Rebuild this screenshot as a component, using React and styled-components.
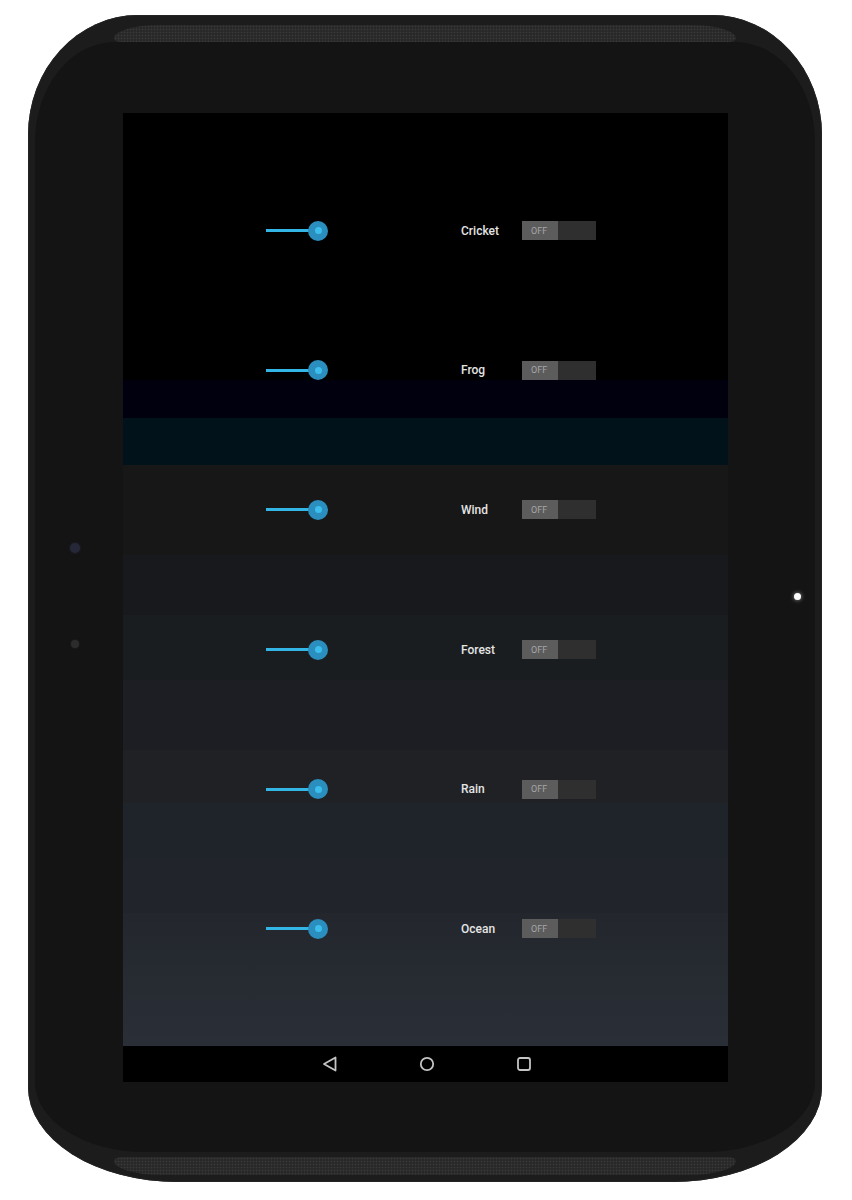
import React from 'react';
import styled, { createGlobalStyle } from 'styled-components';

const GlobalStyle = createGlobalStyle`
  html, body {
    margin: 0;
    padding: 0;
    background: #ffffff;
  }
`;

const Page = styled.div`
  width: 852px;
  height: 1200px;
  padding: 15px 0 0 28px;
  box-sizing: border-box;
  display: flex;
  align-items: flex-start;
`;

const Device = styled.div`
  position: relative;
  width: 794px;
  height: 1167px;
  background: #1c1c1c;
  border-radius: 110px 110px 150px 150px / 120px 120px 95px 95px;
  display: flex;
  flex-direction: column;
  align-items: center;
  box-shadow: inset 0 0 0 1px #232323;
`;

const Grille = styled.div`
  width: 622px;
  height: ${(p) => p.h}px;
  margin-top: ${(p) => p.mt}px;
  background-color: #282828;
  background-image: radial-gradient(circle, #3a3a3a 0.7px, transparent 1.1px);
  background-size: 3px 3px;
  border-radius: ${(p) =>
    p.bottom
      ? '10px 10px 60px 60px / 5px 5px 18px 18px'
      : '60px 60px 10px 10px / 18px 18px 5px 5px'};
`;

const Face = styled.div`
  width: 780px;
  height: 1110px;
  background: #141414;
  border-radius: 80px 80px 110px 110px / 100px 100px 70px 70px;
  display: flex;
  justify-content: center;
  align-items: flex-start;
  padding: 71px 0 0 1px;
  box-sizing: border-box;
`;

const Dot = styled.div`
  position: absolute;
  left: ${(p) => p.x}px;
  top: ${(p) => p.y}px;
  width: ${(p) => p.size}px;
  height: ${(p) => p.size}px;
  border-radius: 50%;
  background: ${(p) => p.color};
  box-shadow: 0 0 ${(p) => p.glow}px ${(p) => p.glowColor};
`;

const Screen = styled.div`
  width: 605px;
  height: 969px;
  display: flex;
  flex-direction: column;
  background: #000;
`;

const Content = styled.div`
  flex: 1;
  padding-top: 48px;
  box-sizing: border-box;
  background: linear-gradient(
    to bottom,
    #000000 0 267px,
    #00000f 267px 305px,
    #02121a 305px 352px,
    #171717 352px 442px,
    #18191c 442px 502px,
    #1a1d1f 502px 567px,
    #1c1e23 567px 637px,
    #1f2124 637px 690px,
    #1f232a 690px 745px,
    #21252b 745px 800px,
    #23272d 800px,
    #2a2e36 933px
  );
`;

const Row = styled.div`
  height: 139.6px;
  display: flex;
  align-items: center;
  padding-left: 143px;
`;

const Slider = styled.div`
  position: relative;
  width: 62px;
  height: 21px;
  display: flex;
  align-items: center;
`;

const Track = styled.div`
  width: 52px;
  height: 3px;
  background: #33b5e5;
`;

const Thumb = styled.div`
  position: absolute;
  left: 42px;
  top: 0.5px;
  width: 20px;
  height: 20px;
  border-radius: 50%;
  background: #2a8fbf;
  display: flex;
  align-items: center;
  justify-content: center;

  &::after {
    content: '';
    width: 7px;
    height: 7px;
    border-radius: 50%;
    background: #3cbdec;
  }
`;

const Label = styled.span`
  width: 61px;
  margin-left: 133px;
  font-family: Roboto, 'Liberation Sans', sans-serif;
  font-size: 12px;
  font-weight: 500;
  color: #e4e4e4;
`;

const Switch = styled.div`
  width: 74px;
  height: 19px;
  background: #2f2f2f;
  display: flex;
`;

const Knob = styled.div`
  width: 36px;
  height: 100%;
  background: #5c5c5c;
  font-family: Roboto, 'Liberation Sans', sans-serif;
  font-size: 9px;
  color: #a6a6a6;
  display: flex;
  align-items: center;
  padding-left: 9px;
  box-sizing: border-box;
`;

const NavBar = styled.div`
  height: 36px;
  background: #000;
  display: flex;
  align-items: center;
  justify-content: center;
  gap: 77px;
  padding-left: 2px;
`;

const NavIcon = styled.svg`
  width: 20px;
  height: 20px;
  fill: none;
  stroke: #c4c4c4;
  stroke-width: 1.8;
  stroke-linejoin: round;
`;

const sounds = ['Cricket', 'Frog', 'Wind', 'Forest', 'Rain', 'Ocean'];

export default function App() {
  return (
    <>
      <GlobalStyle />
      <Page>
        <Device>
          <Grille mt={10} h={17} />
          <Face>
            <Screen>
              <Content>
                {sounds.map((name) => (
                  <Row key={name}>
                    <Slider>
                      <Track />
                      <Thumb />
                    </Slider>
                    <Label>{name}</Label>
                    <Switch>
                      <Knob>OFF</Knob>
                    </Switch>
                  </Row>
                ))}
              </Content>
              <NavBar>
                <NavIcon viewBox="0 0 20 20">
                  <polygon points="4,10 15.5,3.5 15.5,16.5" />
                </NavIcon>
                <NavIcon viewBox="0 0 20 20">
                  <circle cx="10" cy="10" r="6.2" />
                </NavIcon>
                <NavIcon viewBox="0 0 20 20">
                  <rect x="4" y="4" width="12" height="12" rx="2" />
                </NavIcon>
              </NavBar>
            </Screen>
          </Face>
          <Grille bottom mt={5} h={18} />
          <Dot x={42} y={528} size={10} color="#262838" glow={3} glowColor="#22243a" />
          <Dot x={43} y={625} size={8} color="#2c2c2c" glow={2} glowColor="#262626" />
          <Dot x={766} y={578} size={7} color="#ffffff" glow={4} glowColor="#9a9a9a" />
        </Device>
      </Page>
    </>
  );
}
